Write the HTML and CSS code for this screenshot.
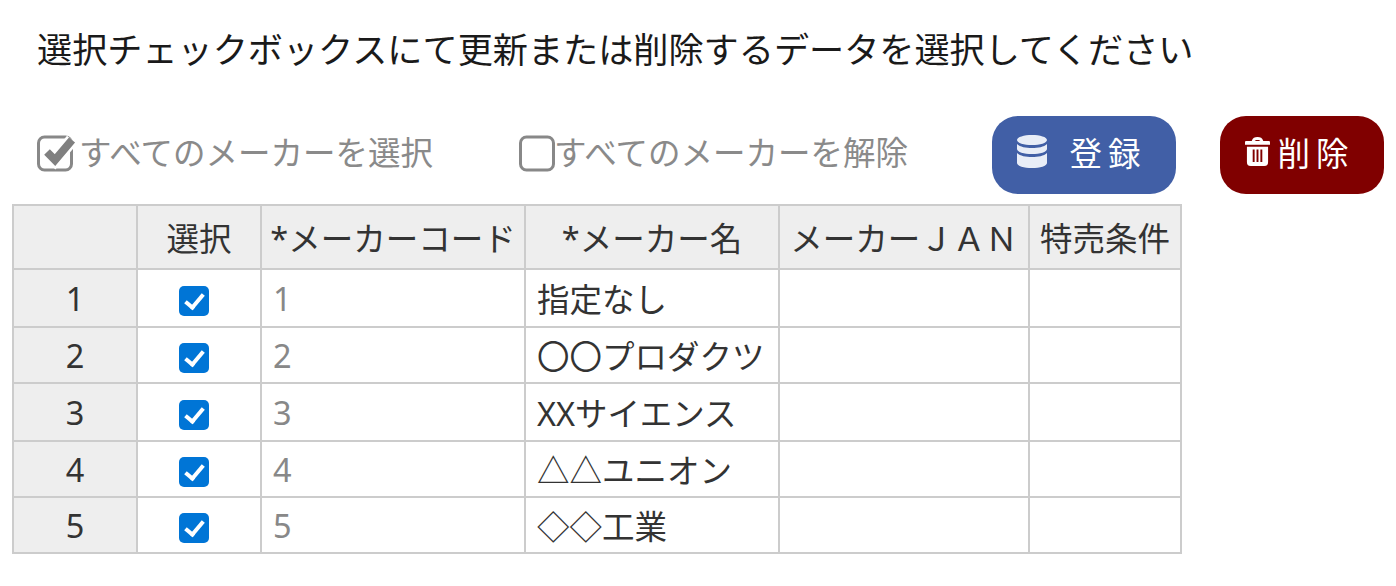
FILE: index.html
```html
<!DOCTYPE html>
<html lang="ja">
<head>
    <meta charset="UTF-8">
    <title>メーカー選択</title>
    <link rel="stylesheet" href="styles.css">
</head>
<body>
    <p class="lead">選択チェックボックスにて更新または削除するデータを選択してください</p>

    <div class="toolbar">
        <div class="select-all">
            <svg class="box-icon" viewBox="0 0 40 38"><rect x="1.5" y="3" width="33" height="33" rx="6" fill="none" stroke="#888" stroke-width="3"/><path d="M10 18l8 8L35 6" fill="none" stroke="#fff" stroke-width="13"/><path d="M10 18l8 8L35 6" fill="none" stroke="#808080" stroke-width="8"/></svg>
            <span>すべてのメーカーを選択</span>
        </div>
        <div class="clear-all">
            <svg class="box-icon" viewBox="0 0 40 38"><rect x="1.5" y="3" width="33" height="33" rx="6" fill="none" stroke="#888" stroke-width="3"/></svg>
            <span>すべてのメーカーを解除</span>
        </div>
        <button class="btn btn-save">
            <svg class="btn-icon" viewBox="0 0 30 33"><path fill="#e8edf7" d="M15 0c8 0 15 2 15 5s-7 5-15 5S0 8 0 5s7-5 15-5zM0 9c3 3 9 4 15 4s12-1 15-4v5c0 3-7 5-15 5S0 17 0 14zM0 18c3 3 9 4 15 4s12-1 15-4v10c0 3-7 5-15 5S0 31 0 28z"/></svg>
            <span>登録</span>
        </button>
        <button class="btn btn-delete">
            <svg class="trash-icon" viewBox="0 0 26 30"><path fill="#fff" fill-rule="evenodd" d="M13 0c3 0 5 1 6 4h6c1 0 1 1 1 2v2H0V6c0-1 0-2 1-2h6c1-3 3-4 6-4zM10 4h6c-1-1-2-1-3-1s-2 0-3 1zM2 10h22v16c0 3-1 4-4 4H6c-3 0-4-1-4-4zM8 13v13h2V13zM12 13v13h2V13zM16 13v13h2V13z"/></svg>
            <span>削除</span>
        </button>
    </div>

    <table class="maker-table">
        <colgroup>
            <col class="col-no"><col class="col-check"><col class="col-code"><col class="col-name"><col class="col-jan"><col class="col-cond">
        </colgroup>
        <thead>
            <tr>
                <th></th>
                <th>選択</th>
                <th>*メーカーコード</th>
                <th>*メーカー名</th>
                <th>メーカーＪＡＮ</th>
                <th>特売条件</th>
            </tr>
        </thead>
        <tbody>
            <tr class="row-a"><th>1</th><td class="check"><input type="checkbox" checked></td><td class="code">1</td><td>指定なし</td><td></td><td></td></tr>
            <tr class="row-b"><th>2</th><td class="check"><input type="checkbox" checked></td><td class="code">2</td><td>〇〇プロダクツ</td><td></td><td></td></tr>
            <tr class="row-a"><th>3</th><td class="check"><input type="checkbox" checked></td><td class="code">3</td><td>XXサイエンス</td><td></td><td></td></tr>
            <tr class="row-b"><th>4</th><td class="check"><input type="checkbox" checked></td><td class="code">4</td><td>△△ユニオン</td><td></td><td></td></tr>
            <tr class="row-c"><th>5</th><td class="check"><input type="checkbox" checked></td><td class="code">5</td><td>◇◇工業</td><td></td><td></td></tr>
        </tbody>
    </table>
</body>
</html>
```

FILE: styles.css
```css
body {
    margin: 0;
    padding: 0 12px;
    background: #fff;
    color: #333;
    font-family: "Noto Sans", "Noto Sans CJK JP", sans-serif;
    font-size: 32.5px;
    overflow: hidden;
}

.lead {
    margin: 0;
    padding: 26px 0 0 25px;
    height: 116px;
    box-sizing: border-box;
    font-size: 35.15px;
    line-height: 46px;
    color: #1a1a1a;
    white-space: nowrap;
}

.toolbar {
    display: flex;
    align-items: center;
    height: 78px;
    padding-left: 25px;
    margin-bottom: 10px;
    color: #8a8a8a;
}

.select-all, .clear-all {
    display: flex;
    align-items: center;
    height: 46px;
    line-height: 46px;
    margin-bottom: 4px;
}

.select-all {
    width: 482px;
}

.clear-all {
    width: 473px;
}

.box-icon {
    width: 40px;
    height: 38px;
    flex: none;
    margin-right: 2px;
}

.clear-all .box-icon {
    margin-right: -5px;
}

.btn {
    display: flex;
    align-items: center;
    justify-content: center;
    height: 78px;
    border: none;
    border-radius: 26px;
    color: #fff;
    font-family: inherit;
    font-size: 32.5px;
    letter-spacing: 6px;
    padding: 0 0 7px;
}

.btn-save {
    width: 184px;
    background: #415fa6;
    gap: 22px;
    margin-right: 44px;
}

.btn-delete {
    width: 164px;
    background: #800000;
    gap: 7px;
}

.btn-icon {
    width: 30px;
    height: 33px;
    margin-left: -4px;
}

.trash-icon {
    width: 25px;
    height: 29px;
    margin-left: -4px;
}

.maker-table {
    border-collapse: collapse;
    table-layout: fixed;
    width: 1168px;
}

.col-no, .col-check { width: 124px; }
.col-code { width: 264px; }
.col-name { width: 254px; }
.col-jan { width: 250px; }
.col-cond { width: 152px; }

.maker-table th, .maker-table td {
    border: 2px solid #ccc;
    padding: 0 11px;
    font-weight: normal;
    white-space: nowrap;
    overflow: hidden;
}

.maker-table th {
    background: #eee;
    text-align: center;
    padding: 0;
}

.maker-table thead tr { height: 64px; }
.row-a { height: 58px; }
.row-b { height: 56px; }
.row-c { height: 56px; }

.code {
    color: #888;
}

.maker-table .check {
    padding: 0;
}

.check input {
    appearance: none;
    display: block;
    position: relative;
    width: 30px;
    height: 30px;
    margin: 6px 0 0 41px;
    border-radius: 5px;
    background: #0075d6;
}

/* tick mark */
.check input::after {
    content: "";
    position: absolute;
    left: 10px;
    top: 4px;
    width: 7px;
    height: 15px;
    border: solid #fff;
    border-width: 0 4.5px 4.5px 0;
    transform: rotate(40deg);
}
```
